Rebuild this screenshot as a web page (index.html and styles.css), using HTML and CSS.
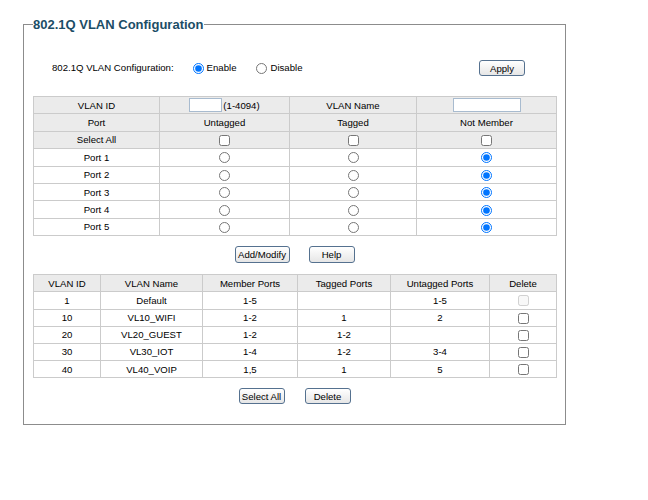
FILE: index.html
```html
<!DOCTYPE html>
<html>
<head>
<meta charset="utf-8">
<title>802.1Q VLAN Configuration</title>
<link rel="stylesheet" href="styles.css">
</head>
<body>
<fieldset class="panel">
  <legend class="panel-title">802.1Q VLAN Configuration</legend>
  <div class="panel-body">
    <div class="mode-row">
      <span class="mode-label">802.1Q VLAN Configuration:</span>
      <label class="opt"><input type="radio" name="mode" checked>Enable</label>
      <label class="opt opt-disable"><input type="radio" name="mode">Disable</label>
      <button class="btn btn-apply">Apply</button>
    </div>

    <table class="grid grid-ports">
      <colgroup><col class="c1"><col class="c2"><col class="c3"><col class="c4"></colgroup>
      <tr class="hd">
        <td>VLAN ID</td>
        <td><input type="text" class="txt txt-id"><span class="hint">(1-4094)</span></td>
        <td>VLAN Name</td>
        <td><input type="text" class="txt txt-name"></td>
      </tr>
      <tr class="hd"><td>Port</td><td>Untagged</td><td>Tagged</td><td>Not Member</td></tr>
      <tr class="hd"><td>Select All</td><td><input type="checkbox" class="chk"></td><td><input type="checkbox" class="chk"></td><td><input type="checkbox" class="chk"></td></tr>
      <tr><td>Port 1</td><td><input type="radio" class="rad" name="p1"></td><td><input type="radio" class="rad" name="p1"></td><td><input type="radio" class="rad" name="p1" checked></td></tr>
      <tr><td>Port 2</td><td><input type="radio" class="rad" name="p2"></td><td><input type="radio" class="rad" name="p2"></td><td><input type="radio" class="rad" name="p2" checked></td></tr>
      <tr><td>Port 3</td><td><input type="radio" class="rad" name="p3"></td><td><input type="radio" class="rad" name="p3"></td><td><input type="radio" class="rad" name="p3" checked></td></tr>
      <tr><td>Port 4</td><td><input type="radio" class="rad" name="p4"></td><td><input type="radio" class="rad" name="p4"></td><td><input type="radio" class="rad" name="p4" checked></td></tr>
      <tr><td>Port 5</td><td><input type="radio" class="rad" name="p5"></td><td><input type="radio" class="rad" name="p5"></td><td><input type="radio" class="rad" name="p5" checked></td></tr>
    </table>

    <div class="btn-row btn-row-1">
      <button class="btn btn-add">Add/Modify</button>
      <button class="btn btn-help">Help</button>
    </div>

    <table class="grid grid-vlans">
      <colgroup><col class="d1"><col class="d2"><col class="d3"><col class="d4"><col class="d5"><col class="d6"></colgroup>
      <tr class="hd"><td>VLAN ID</td><td>VLAN Name</td><td>Member Ports</td><td>Tagged Ports</td><td>Untagged Ports</td><td>Delete</td></tr>
      <tr><td>1</td><td>Default</td><td>1-5</td><td></td><td>1-5</td><td><input type="checkbox" class="chk" disabled></td></tr>
      <tr><td>10</td><td>VL10_WIFI</td><td>1-2</td><td>1</td><td>2</td><td><input type="checkbox" class="chk"></td></tr>
      <tr><td>20</td><td>VL20_GUEST</td><td>1-2</td><td>1-2</td><td></td><td><input type="checkbox" class="chk"></td></tr>
      <tr><td>30</td><td>VL30_IOT</td><td>1-4</td><td>1-2</td><td>3-4</td><td><input type="checkbox" class="chk"></td></tr>
      <tr><td>40</td><td>VL40_VOIP</td><td>1,5</td><td>1</td><td>5</td><td><input type="checkbox" class="chk"></td></tr>
    </table>

    <div class="btn-row btn-row-2">
      <button class="btn btn-sel">Select All</button>
      <button class="btn btn-del">Delete</button>
    </div>
  </div>
</fieldset>
</body>
</html>
```

FILE: styles.css
```css
html, body {
  margin: 0;
  padding: 0;
  background: #fff;
}
body {
  font-family: "Liberation Sans", Arial, Helvetica, sans-serif;
  font-size: 9.6px;
  color: #000;
}
.panel {
  margin: 16px 0 0 23px;
  width: 543px;
  box-sizing: border-box;
  border: 1px solid #8c8c8c;
  padding: 0 9px 20px 9px;
  min-inline-size: 0;
}
.panel-title {
  font-size: 13px;
  font-weight: bold;
  line-height: 17px;
  color: #1b4d66;
  padding: 0 1px 0 0;
  margin: 0;
}
.panel-body {
  display: flex;
  flex-direction: column;
  padding-top: 27px;
}
.mode-row {
  display: flex;
  align-items: center;
  height: 16px;
  padding-left: 19px;
}
.mode-label {
  margin-right: 19px;
  line-height: 14px;
}
.opt {
  display: flex;
  align-items: center;
  line-height: 14px;
}
.opt input {
  width: 11px;
  height: 11px;
  margin: 0 3px 0 0;
}
.opt-disable {
  margin-left: 20px;
}
.btn {
  font-family: "Liberation Sans", Arial, Helvetica, sans-serif;
  font-size: 9.6px;
  color: #000;
  height: 16px;
  padding: 0;
  border: 1px solid #55718f;
  border-radius: 3px;
  background: linear-gradient(#ffffff, #e6e6e6);
  box-sizing: border-box;
}
.btn-apply {
  width: 46px;
  margin-left: auto;
  margin-right: 31px;
}
.grid {
  border-collapse: collapse;
  width: 523px;
  table-layout: fixed;
}
.grid td {
  border: 1px solid #cbcbcb;
  text-align: center;
  padding: 0;
  white-space: nowrap;
}
.grid .hd td {
  background: #ebebeb;
}
.grid-ports {
  margin-top: 20px;
}
.grid-ports tr {
  height: 17.4px;
}
.c1 { width: 126px; }
.c2 { width: 130px; }
.c3 { width: 127px; }
.c4 { width: 140px; }
.grid-vlans {
  margin-top: 11px;
}
.grid-vlans tr {
  height: 17.2px;
}
.d1 { width: 67px; }
.d2 { width: 102px; }
.d3 { width: 95px; }
.d4 { width: 93px; }
.d5 { width: 99px; }
.d6 { width: 67px; }
.txt {
  height: 14px;
  box-sizing: border-box;
  border: 1px solid #a8bbcf;
  padding: 0;
  margin: 0;
  vertical-align: middle;
  background: #fff;
}
.txt-id { width: 33px; }
.txt-name { width: 68px; }
.hint {
  vertical-align: middle;
  margin-left: 1px;
}
.chk, .rad {
  width: 11px;
  height: 11px;
  margin: 0;
  vertical-align: middle;
}
.btn-row {
  display: flex;
  justify-content: center;
  gap: 19px;
}
.btn-row-1 {
  margin-top: 10px;
}
.btn-row-1 .btn {
  height: 17px;
}
.btn-add { width: 55px; }
.btn-help { width: 46px; }
.btn-row-2 {
  margin-top: 10px;
  gap: 20px;
}
.btn-sel { width: 46px; }
.btn-del { width: 46px; }
```
